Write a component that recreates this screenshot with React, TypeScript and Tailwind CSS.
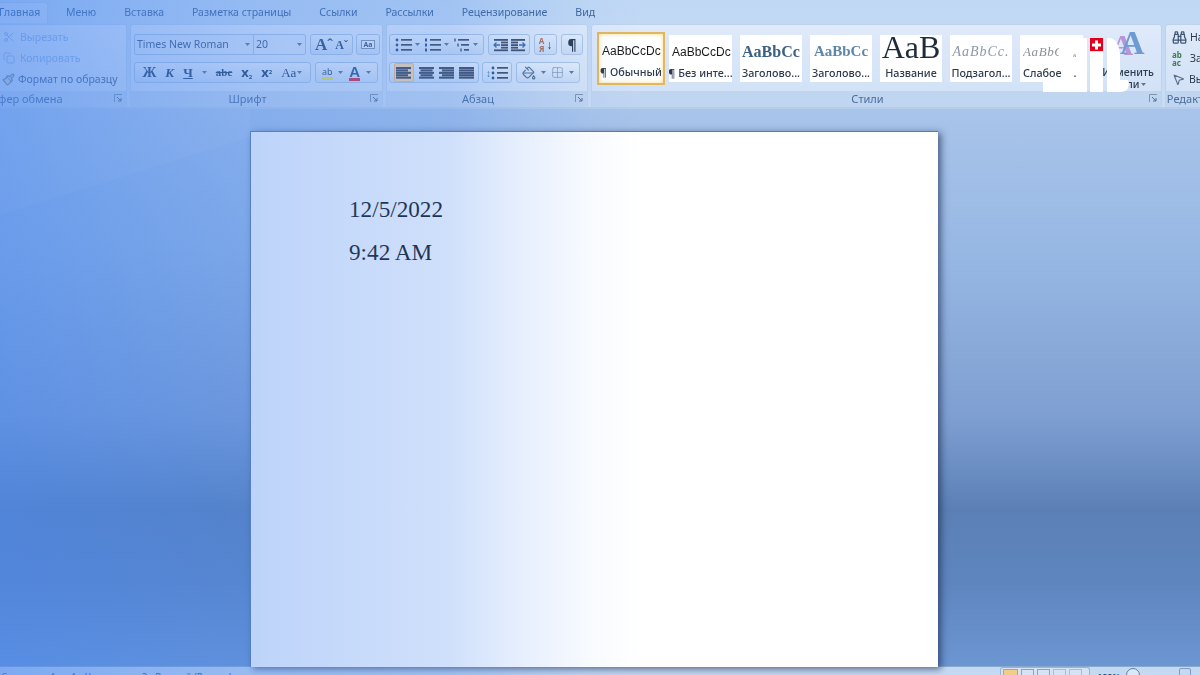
import React from "react";
import { Scissors, Copy, Paintbrush, Binoculars, MousePointer2, PaintBucket, Grid2x2 } from "lucide-react";

const Caret = () => (
  <svg width="5" height="3" viewBox="0 0 5 3" className="shrink-0"><path d="M0 0h5L2.5 3z" fill="#5f7895" /></svg>
);

const Launcher = () => (
  <svg width="9" height="9" viewBox="0 0 9 9" className="justify-self-end mr-[3px]">
    <path d="M.5 8V.5H8" fill="none" stroke="#7f94ad" />
    <path d="M3 3l4 4M7 4v3H4" fill="none" stroke="#55708f" />
  </svg>
);

const Lines = ({ kind }: { kind: "l" | "c" | "r" | "j" }) => {
  const rows = [0, 1, 2, 3, 4];
  return (
    <svg width="15" height="12" viewBox="0 0 15 12">
      {rows.map((i) => {
        const short = i % 2 === 1 ? 3 : 0;
        const w = kind === "j" ? 15 : 15 - short;
        const x = kind === "l" || kind === "j" ? 0 : kind === "r" ? short : short / 2;
        return <rect key={i} x={x} y={i * 2.4} width={w} height="2.1" fill="#3f4c62" />;
      })}
    </svg>
  );
};

const ListIcon = ({ variant }: { variant: "b" | "n" | "m" }) => (
  <svg width="17" height="14" viewBox="0 0 17 14">
    {[1, 6, 11].map((y, i) => (
      <g key={y}>
        {variant === "b" && <circle cx="2" cy={y + 1} r="1.4" fill="#2f5288" />}
        {variant === "n" && <rect x="1" y={y - 0.5} width="2" height="3" fill="#2f5288" />}
        {variant === "m" && <rect x={1 + i * 3} y={y - 0.5} width="2" height="3" fill="#6a7f9c" />}
        <rect x={variant === "m" ? 5 + i * 3 : 6} y={y} width={variant === "m" ? 11 - i * 3 : 11} height="1.7" fill="#3f4c62" />
      </g>
    ))}
  </svg>
);

const Indent = ({ flip }: { flip?: boolean }) => (
  <svg width="16" height="14" viewBox="0 0 16 14" style={{ transform: flip ? "scaleX(-1)" : undefined }}>
    {[0, 2.6, 5.2, 7.8, 10.4].map((y, i) => (
      <rect key={y} x={i === 0 || i === 4 ? 1 : 8} y={y + 1} width={i === 0 || i === 4 ? 14 : 7} height="1.8" fill="#3f4c62" />
    ))}
    <path d="M7 7H1M3.5 4.5L1 7l2.5 2.5" fill="none" stroke="#3d6aa5" strokeWidth="1.3" />
  </svg>
);

const Seg = ({ children, w, className = "" }: { children: React.ReactNode; w: string; className?: string }) => (
  <div className={`h-[21px] ${w} shrink-0 flex items-center justify-around px-[3px] rounded-[3px] border border-[#a9c4e6] bg-gradient-to-b from-[#e4eefb] to-[#c9dcf4] ${className}`}>
    {children}
  </div>
);

const Group = ({ label, w, children, launcher = true, className = "", labelClass = "-translate-x-[9px]" }: { label: string; w: string; children: React.ReactNode; launcher?: boolean; className?: string; labelClass?: string }) => (
  <section className={`${w} shrink-0 h-[84px] flex flex-col rounded-[3px] border border-[#bcd3ee] bg-gradient-to-b from-[#dfeafa] to-[#cfe0f6] overflow-hidden`}>
    <div className={`flex-1 min-h-0 ${className}`}>{children}</div>
    <div className="h-[16px] pb-[2px] grid grid-cols-[1fr_auto_1fr] items-center bg-[#c0d5f0] text-[#4a6d9c] text-[11px] leading-none">
      <span />
      <span className={labelClass}>{label}</span>
      {launcher ? <Launcher /> : <span />}
    </div>
  </section>
);

const styles = [
  { s: "AaBbCcDc", f: "font-['Liberation_Sans'] text-[12px] text-[#1b1b1b] justify-start pl-[3px]", l: "¶ Обычный", w: "w-[68px] h-[53px] -my-[3px] -mr-[4px] border-2 border-[#e2b75e] shadow-[inset_0_0_4px_#f7dd8a]" },
  { s: "AaBbCcDc", f: "font-['Liberation_Sans'] text-[12px] text-[#1b1b1b] justify-start pl-[3px]", l: "¶ Без инте...", w: "w-[63px] h-[47px]" },
  { s: "AaBbCc", f: "font-['Liberation_Serif'] font-bold text-[16px] text-[#3c6183] justify-start pl-[2px]", l: "Заголово...", w: "w-[62px] h-[47px]" },
  { s: "AaBbCc", f: "font-['Liberation_Serif'] font-bold text-[15px] text-[#5d87a9] justify-center", l: "Заголово...", w: "w-[62px] h-[47px]" },
  { s: "AaB", f: "font-['Liberation_Serif'] text-[32px] text-[#1e2b3a] justify-center -translate-y-[5px]", l: "Название", w: "w-[62px] h-[47px]" },
  { s: "AaBbCc.", f: "font-['Liberation_Serif'] italic text-[14px] text-[#8b99aa] tracking-[1px] justify-center", l: "Подзагол...", w: "w-[62px] h-[47px]" },
];

const tabs = ["Меню", "Вставка", "Разметка страницы", "Ссылки", "Рассылки", "Рецензирование", "Вид"];

export default function App() {
  return (
    <div className="relative w-[1200px] h-[675px] overflow-hidden flex flex-col bg-[#c8dcf4] font-['Noto_Sans',sans-serif]">
      {/* ribbon */}
      <header className="shrink-0 h-[109px] bg-gradient-to-b from-[#c0d8f4] to-[#c9dcf4] border-b-2 border-[#b5cdea] overflow-hidden blur-[0.4px]">
        <nav className="h-[23px] flex items-end -ml-[7px] text-[#3c6498] text-[10.5px]">
          <div className="h-[21px] w-[55px] pl-[5px] flex items-center rounded-t-[3px] border border-b-0 border-[#b7cfec] bg-[#d4e3f7] text-[#2f5a94]">Главная</div>
          <div className="flex h-[21px] items-center gap-[28px] ml-[18px]">
            {tabs.map((t) => <span key={t}>{t}</span>)}
          </div>
        </nav>
        <div className="flex gap-[3px] pt-[1px] -ml-[34px] w-[1300px]">
          {/* clipboard */}
          <Group label="Буфер обмена" w="w-[161px]" labelClass="-translate-x-[22px]" className="pl-[36px] pt-[3px] flex flex-col gap-[3px] text-[10.5px] leading-[18px]">
            <div className="flex items-center gap-[5px] text-[#8eb4ea]"><Scissors size={12} className="text-[#9ab8e2]" />Вырезать</div>
            <div className="flex items-center gap-[5px] text-[#8eb4ea]"><Copy size={12} className="text-[#9ab8e2]" />Копировать</div>
            <div className="flex items-center gap-[3px] text-[#3e5f8c] -ml-[1px] whitespace-nowrap"><Paintbrush size={13} className="text-[#6b7f9c] fill-[#d8d8c8]" />Формат по образцу</div>
          </Group>

          {/* font */}
          <Group label="Шрифт" w="w-[253px]" className="pl-[3px] pt-[9px] flex flex-col gap-[7px]">
            <div className="flex items-center h-[21px]">
              <div className="w-[172px] h-[21px] shrink-0 flex rounded-[2px] border border-[#a9c4e6] bg-[#d9e6f8] text-[#3a5a85] text-[10.5px]">
                <div className="w-[119px] flex items-center justify-between pl-[2px] pr-[3px] border-r border-[#a9c4e6] whitespace-nowrap">Times New Roman<Caret /></div>
                <div className="flex-1 flex items-center justify-between pl-[2px] pr-[3px]">20<Caret /></div>
              </div>
              <Seg w="w-[43px] ml-[4px]" className="font-['Liberation_Serif'] text-[#2f5084]">
                <span className="text-[17px] font-bold leading-none">Aˆ</span>
                <span className="text-[12px] font-bold leading-none">Aˇ</span>
              </Seg>
              <Seg w="w-[24px] ml-[3px]">
                <span className="relative text-[7px] font-bold text-[#35588a] leading-none border border-[#7f94ad] bg-[#eef] px-[1px]">Aa</span>
              </Seg>
            </div>
            <div className="flex items-center h-[21px]">
              <Seg w="w-[177px]" className="text-[#26426b]">
                <span className="text-[14px] font-bold font-['Liberation_Serif']">Ж</span>
                <span className="text-[13px] italic font-bold font-['Liberation_Serif']">К</span>
                <span className="text-[13px] font-bold underline font-['Liberation_Serif']">Ч</span>
                <Caret />
                <span className="text-[11px] font-bold line-through font-['Liberation_Serif']">abc</span>
                <span className="text-[13px] font-bold leading-none">x<sub className="text-[6px]">2</sub></span>
                <span className="text-[13px] font-bold leading-none">x<sup className="text-[6px]">2</sup></span>
                <span className="text-[13px] font-['Liberation_Serif'] flex items-center gap-[1px]">Aa<Caret /></span>
              </Seg>
              <Seg w="w-[63px] ml-[4px]">
                <span className="text-[9px] leading-[11px] text-[#3a4f74] border-b-[3px] border-[#e8e24d]">ab</span>
                <Caret />
                <span className="text-[15px] font-bold leading-[13px] text-[#2f5a94] border-b-[3px] border-[#d62f4c] font-['Liberation_Sans']">A</span>
                <Caret />
              </Seg>
            </div>
          </Group>

          {/* paragraph */}
          <Group label="Абзац" w="w-[202px]" className="pl-[2px] pt-[9px] flex flex-col gap-[7px]">
            <div className="flex h-[21px] gap-[4px]">
              <Seg w="w-[95px]">
                <ListIcon variant="b" /><Caret /><ListIcon variant="n" /><Caret /><ListIcon variant="m" /><Caret />
              </Seg>
              <Seg w="w-[42px]"><Indent /><Indent flip /></Seg>
              <Seg w="w-[23px]">
                <span className="text-[8px] font-bold leading-[8px] text-[#b06a58] text-center">А<br />Я</span>
                <span className="text-[#2f3f58] text-[12px] leading-none font-bold">↓</span>
              </Seg>
              <Seg w="w-[22px]"><span className="text-[14px] font-bold leading-none text-[#2a3a52]">¶</span></Seg>
            </div>
            <div className="flex h-[21px] gap-[3px]">
              <Seg w="w-[90px]" className="!px-[1px]">
                <span className="w-[20px] h-[19px] flex items-center justify-center rounded-[2px] bg-[#f7d8a8] border border-[#e3c08a]"><Lines kind="l" /></span>
                <Lines kind="c" /><Lines kind="r" /><Lines kind="j" />
              </Seg>
              <Seg w="w-[30px]">
                <span className="text-[#3d6aa5] text-[10px] leading-none font-bold">↕</span>
                <ListIcon variant="b" />
              </Seg>
              <Seg w="w-[64px] ml-[1px]">
                <PaintBucket size={14} className="text-[#55708f]" /><Caret />
                <Grid2x2 size={13} strokeWidth={1} className="text-[#6a83a4]" /><Caret />
              </Seg>
            </div>
          </Group>

          {/* styles */}
          <Group label="Стили" w="w-[571px]" className="pl-[5px] pt-[10px] flex items-start">
            <div className="flex gap-[8px] w-[484px] shrink-0 overflow-visible">
              {styles.map((st) => (
                <div key={st.l + st.f} className={`${st.w} shrink-0 bg-white overflow-hidden flex flex-col items-center`}>
                  <div className={`h-[30px] w-full flex items-center overflow-hidden whitespace-nowrap leading-none pt-[3px] ${st.f}`}>{st.s}</div>
                  <div className="text-[10.8px] font-medium leading-[16px] text-[#2e3b4d] whitespace-nowrap">{st.l}</div>
                </div>
              ))}
              <div className="w-[63px] h-[47px] shrink-0 bg-white overflow-hidden flex flex-col pl-[3px]">
                <div className="h-[30px] flex items-center whitespace-nowrap pt-[3px] leading-none">
                  <span className="w-[36px] overflow-hidden font-['Liberation_Serif'] italic text-[13px] text-[#8a8f98] tracking-[0.6px]">AaBbCc</span>
                  <span className="ml-[14px] text-[10px] text-[#8a8f98]">„</span>
                </div>
                <div className="flex text-[10.8px] font-medium leading-[16px] text-[#2e3b4d] whitespace-nowrap">
                  <span>Слабое</span>
                  <span className="ml-[12px]">.</span>
                </div>
              </div>
            </div>
            <div className="flex flex-col items-center w-[60px] ml-[17px] -mt-[9px]">
              <div className="flex h-[34px] items-end font-['Liberation_Serif'] font-bold leading-none">
                <span className="text-[30px] text-[#b894d8]">A</span>
                <span className="text-[34px] text-[#6d9bd2] -ml-[13px]">A</span>
              </div>
              <div className="text-[10.5px] font-medium leading-[12px] text-[#2e3b4d] text-center mt-[6px]">Изменить<br /><span className="inline-flex items-center gap-[2px]">стили<Caret /></span></div>
            </div>
          </Group>

          {/* editing */}
          <Group label="Редактирование" w="w-[92px]" launcher={false} labelClass="" className="pl-[6px] pt-[4px] flex flex-col gap-[4px] text-[10.5px] leading-[17px] text-[#2e3b4d] whitespace-nowrap">
            <div className="flex items-center gap-[3px]"><Binoculars size={15} className="text-[#3f5675]" />Найти</div>
            <div className="flex items-center gap-[3px]"><span className="w-[15px] text-[8px] leading-[8px] text-[#3f7a50] font-bold">ab<br />ac</span>Заменить</div>
            <div className="flex items-center gap-[4px]"><MousePointer2 size={13} className="text-[#5a6b82]" />Выделить</div>
          </Group>
        </div>
      </header>

      {/* workspace */}
      <main className="relative flex-1 min-h-0 pt-[22px] pl-[250px] bg-[linear-gradient(180deg,#a8c4ea_0%,#98b8e4_25%,#7f9fd2_55%,#5b80b6_72%,#5f85bf_85%,#6c96d2_100%)]">
        <svg className="absolute inset-0 w-full h-[200px]" viewBox="0 0 1200 200" preserveAspectRatio="none">
          <path d="M0 106L250 28V0H0z" fill="#ffffff" fillOpacity="0.07" />
        </svg>
        <article className="relative w-[688px] h-[536px] bg-white border-t border-l border-[#5e7aa8] shadow-[3px_2px_7px_rgba(25,40,80,0.65)] pl-[98px] pt-[63px] font-['Liberation_Serif',serif] text-[23.2px] leading-[28px] text-[#101418]">
          <p>12/5/2022</p>
          <p className="mt-[15px]">9:42 AM</p>
        </article>
      </main>

      {/* status bar */}
      <footer className="shrink-0 h-[9px] overflow-hidden flex items-start justify-between bg-[#c4d9f2] border-t border-[#8aa7cc] text-[9.5px] leading-[13px] text-[#3a5a85]">
        <div className="flex items-start gap-[8px] pl-[1px] pt-[3px] whitespace-nowrap">
          <span>Страница: 1 из 1</span>
          <span>Число слов: 2</span>
          <span>Русский (Россия)</span>
        </div>
        <div className="flex items-start pr-[9px]">
          <div className="flex h-[9px] w-[90px] gap-[3px] pl-[2px] pt-[1px] rounded-t-[3px] border border-b-0 border-[#9ab3d3] bg-[#d4e3f6] mr-[7px]">
            <span className="w-[15px] h-[10px] bg-[#f2cd8a] border border-[#c4a268]" />
            <span className="w-[13px] h-[10px] border border-[#8ba3c2]" />
            <span className="w-[13px] h-[10px] border border-[#8ba3c2]" />
            <span className="w-[13px] h-[10px] border border-[#a8bdd8]" />
            <span className="w-[13px] h-[10px] border border-[#a8bdd8]" />
          </div>
          <span className="font-bold text-[#2f4d78] w-[22px] pt-[3px] text-[9px]">100%</span>
          <span className="w-[14px] h-[14px] rounded-full border border-[#5f7fa8] bg-white/40 ml-[7px] mt-[1px]" />
          <span className="w-[12px] h-[12px] rounded-[2px] border border-[#7f9cc2] ml-[39px] mt-[1px]" />
        </div>
      </footer>

      {/* photographic blue haze across the left of the picture */}
      <div className="absolute inset-0 pointer-events-none bg-[linear-gradient(90deg,rgba(72,135,240,0.58)_0%,rgba(72,135,240,0.36)_21%,rgba(72,135,240,0.26)_37.5%,rgba(72,135,240,0.14)_43%,rgba(72,135,240,0.04)_49%,rgba(72,135,240,0)_53.5%)]" />

      {/* watermark logo */}
      <svg className="absolute left-[1040px] top-[30px]" width="95" height="65" viewBox="0 0 95 65">
        <path d="M3 62V52H36V8H47V62H3Z" fill="#ffffff" />
        <path d="M50 22H63V62H50Z" fill="#ffffff" />
        <path d="M67 8H69C76 8 80 16 80 26V50H88C91 56 88 62 80 62H67Z" fill="#ffffff" />
        <rect x="50" y="8" width="13" height="13" fill="#e0001b" />
        <path d="M55 10.5h3v3h3v3h-3v3h-3v-3h-3v-3h3z" fill="#ffffff" />
      </svg>
    </div>
  );
}
